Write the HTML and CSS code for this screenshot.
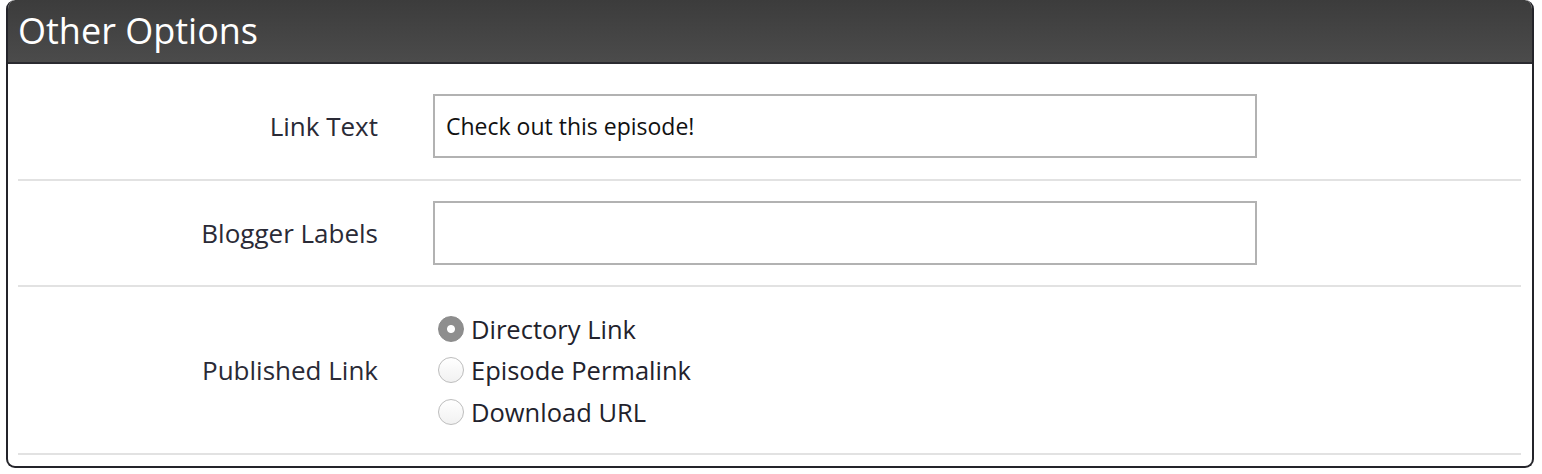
FILE: index.html
```html
<!DOCTYPE html>
<html lang="en">
<head>
	<meta charset="utf-8" />
	<title>Other Options</title>
	<link rel="stylesheet" href="styles.css">
</head>
<body>
<div class="panel">
	<h2 class="panelHeader">Other Options</h2>
	<div class="panelBody">
		<div class="formRow">
			<label class="rowLabel" for="linkText">Link Text</label>
			<input class="textField" id="linkText" type="text" value="Check out this episode!">
		</div>
		<div class="formRow">
			<label class="rowLabel" for="bloggerLabels">Blogger Labels</label>
			<input class="textField" id="bloggerLabels" type="text" value="">
		</div>
		<div class="formRow radioRow">
			<span class="rowLabel">Published Link</span>
			<div class="radioGroup">
				<label class="radioItem"><input type="radio" name="published" checked><span>Directory Link</span></label>
				<label class="radioItem"><input type="radio" name="published"><span>Episode Permalink</span></label>
				<label class="radioItem"><input type="radio" name="published"><span>Download URL</span></label>
			</div>
		</div>
	</div>
</div>
</body>
</html>
```
FILE: styles.css
```css
body{
	margin:0;
	padding:0 8px 8px 6px;
	font-family:"Open Sans", "Liberation Sans", sans-serif;
	background:#fff;
}

.panel{
	width:1528px;
	box-sizing:border-box;
	border-radius:9px;
	overflow:hidden;
	border:2px solid #24242a;
	border-top:none;
}

.panelHeader{
	margin:0 -2px;
	height:64px;
	padding-left:12px;
	box-sizing:border-box;
	background:linear-gradient(#3c3c3c, #4b4b4b);
	border-bottom:2px solid #2a2a30;
	color:#fff;
	font-size:36px;
	font-weight:400;
	line-height:62px;
	border-radius:9px 9px 0 0;
}

.panelBody{
	padding:10px 11px 11px 10px;
}

.formRow{
	display:grid;
	grid-template-columns:360px 824px;
	column-gap:55px;
	align-items:center;
	padding:20px 0 20px;
	border-bottom:2px solid #e2e2e2;
}

.formRow:first-child{
	padding-bottom:21px;
}

.rowLabel{
	text-align:right;
	font-size:26px;
	color:#2a2a36;
}

.textField{
	height:64px;
	box-sizing:border-box;
	border:2px solid #b2b2b2;
	padding:0 11px;
	font-family:inherit;
	font-size:23px;
	color:#111;
	outline:none;
}

.radioRow{
	padding:21px 0 20px;
}

.radioGroup{
	display:flex;
	flex-direction:column;
	padding-left:5px;
}

.radioItem{
	display:flex;
	align-items:center;
	height:41.5px;
	font-size:25.5px;
	color:#22222c;
}

.radioItem input{
	appearance:none;
	-webkit-appearance:none;
	margin:0 7px 0 0;
	width:26px;
	height:26px;
	border-radius:50%;
	border:1px solid #bdbdbd;
	background:linear-gradient(#fff, #f1f1f1);
	box-sizing:border-box;
}

.radioItem input:checked{
	border-color:#8a8a8a;
	background:radial-gradient(circle, #fff 0 3.5px, #8e8e8e 4.5px);
}
```
